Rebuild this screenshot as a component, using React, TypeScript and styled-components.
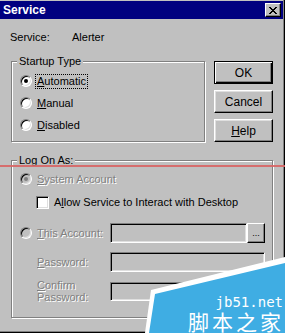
import React from "react";
import styled, { createGlobalStyle } from "styled-components";

const Global = createGlobalStyle`
  html, body { margin: 0; padding: 0; background: #c0c0c0; }
  body { font-family: "Liberation Sans", Arial, sans-serif; font-size: 11px; color: #000; }
`;

const Window = styled.div`
  position: relative;
  width: 285px;
  height: 333px;
  box-sizing: border-box;
  padding-top: 1px;
  background: #c0c0c0;
  overflow: hidden;
  box-shadow: inset -1px -1px 0 #000, inset -2px -2px 0 #808080;
`;

const TitleBar = styled.div`
  height: 18px;
  margin-right: 2px;
  background: #000080;
  display: flex;
  align-items: center;
  justify-content: space-between;
  padding: 0 2px 0 3px;
`;

const TitleText = styled.span`
  color: #fff;
  font-weight: bold;
  font-size: 12px;
`;

const CloseButton = styled.div`
  width: 16px;
  height: 14px;
  box-sizing: border-box;
  background: #c0c0c0;
  border: 1px solid;
  border-color: #fff #000 #000 #fff;
  box-shadow: inset -1px -1px 0 #808080;
  display: flex;
  align-items: center;
  justify-content: center;
`;

const Body = styled.div`
  padding: 0 12px 0 11px;
`;

const InfoRow = styled.div`
  display: flex;
  margin: 12px 0 0 -1px;
  line-height: 13px;
`;

const InfoLabel = styled.span`
  width: 62px;
`;

const TopRow = styled.div`
  display: flex;
  gap: 9px;
  margin-top: 17px;
`;

const GroupBox = styled.div<{ $w: number; $h: number }>`
  position: relative;
  width: ${(p) => p.$w}px;
  height: ${(p) => p.$h}px;
  box-sizing: border-box;
  border: 1px solid #808080;
  box-shadow: inset 1px 1px 0 #fff, 1px 1px 0 #fff;
`;

const Legend = styled.span`
  position: absolute;
  top: -7px;
  left: 5px;
  padding: 0 2px;
  background: #c0c0c0;
  line-height: 13px;
`;

const RadioList = styled.div`
  padding: 8px 0 0 8px;
`;

const OptionRow = styled.div<{ $h?: number; $mt?: number; $indent?: number }>`
  display: flex;
  align-items: center;
  height: ${(p) => p.$h ?? 22}px;
  margin-top: ${(p) => p.$mt ?? 0}px;
  padding-left: ${(p) => p.$indent ?? 0}px;
  gap: 5px;
`;

const Radio = styled.span<{ $checked?: boolean; $disabled?: boolean }>`
  position: relative;
  width: 12px;
  height: 12px;
  flex: none;
  box-sizing: border-box;
  border-radius: 50%;
  border: 1px solid;
  border-color: #808080 #fff #fff #808080;
  background: ${(p) => (p.$disabled ? "#c0c0c0" : "#fff")};
  box-shadow: inset 1px 1px 0 #000, inset -1px -1px 0 #dfdfdf;
  &::after {
    content: "";
    display: ${(p) => (p.$checked ? "block" : "none")};
    position: absolute;
    left: 3px;
    top: 3px;
    width: 4px;
    height: 4px;
    border-radius: 50%;
    background: ${(p) => (p.$disabled ? "#808080" : "#000")};
  }
`;

const Check = styled.span`
  width: 13px;
  height: 13px;
  flex: none;
  box-sizing: border-box;
  border: 1px solid;
  border-color: #808080 #fff #fff #808080;
  background: #fff;
  box-shadow: inset 1px 1px 0 #000, inset -1px -1px 0 #dfdfdf;
`;

const Label = styled.span<{ $disabled?: boolean; $focus?: boolean }>`
  line-height: 13px;
  color: ${(p) => (p.$disabled ? "#808080" : "#000")};
  text-shadow: ${(p) => (p.$disabled ? "1px 1px 0 #fff" : "none")};
  outline: ${(p) => (p.$focus ? "1px dotted #000" : "none")};
  outline-offset: 0px;
  padding: ${(p) => (p.$focus ? "0 1px" : "0")};
  margin-left: ${(p) => (p.$focus ? "-1px" : "0")};
  u { text-decoration-thickness: 1px; text-underline-offset: 1px; }
`;

const TwoLineLabel = styled(Label)`
  line-height: 12px;
`;

const ButtonColumn = styled.div`
  display: flex;
  flex-direction: column;
  gap: 6px;
`;

const Button = styled.div<{ $default?: boolean }>`
  width: 59px;
  height: 23px;
  box-sizing: border-box;
  display: flex;
  align-items: center;
  justify-content: center;
  background: #c0c0c0;
  border: 1px solid;
  border-color: ${(p) => (p.$default ? "#000" : "#fff #000 #000 #fff")};
  box-shadow: ${(p) =>
    p.$default
      ? "inset 1px 1px 0 #fff, inset -1px -1px 0 #000, inset -2px -2px 0 #808080"
      : "inset -1px -1px 0 #808080, inset 1px 1px 0 #dfdfdf"};
  font-size: 12px;
  u { text-decoration-thickness: 1px; text-underline-offset: 1px; }
`;

const LogOnGroup = styled(GroupBox)`
  margin-top: 18px;
`;

const LogOnContent = styled.div`
  padding: 8px 7px 0 8px;
`;

const FieldRow = styled.div<{ $mt: number }>`
  display: flex;
  align-items: center;
  margin-top: ${(p) => p.$mt}px;
`;

const FieldLabelCell = styled.div<{ $indent?: number }>`
  width: 90px;
  flex: none;
  display: flex;
  align-items: center;
  gap: 5px;
  padding-left: ${(p) => p.$indent ?? 0}px;
  box-sizing: border-box;
  line-height: 12px;
`;

const TextBox = styled.div<{ $h?: number }>`
  flex: 1;
  height: ${(p) => p.$h ?? 20}px;
  box-sizing: border-box;
  border: 1px solid;
  border-color: #808080 #fff #fff #808080;
  box-shadow: inset 1px 1px 0 #000, inset -1px -1px 0 #dfdfdf;
  background: #c0c0c0;
`;

const BrowseButton = styled.div`
  width: 18px;
  height: 20px;
  flex: none;
  box-sizing: border-box;
  border: 1px solid;
  border-color: #fff #000 #000 #fff;
  box-shadow: inset -1px -1px 0 #808080;
  display: flex;
  align-items: flex-end;
  justify-content: center;
  padding-bottom: 4px;
  font-size: 9px;
  line-height: 9px;
  color: #000;
`;

const RedLine = styled.div`
  position: absolute;
  left: 0;
  right: 0;
  top: 165px;
  height: 2px;
  background: #d86464;
  opacity: 0.9;
`;

const WatermarkShape = styled.svg`
  position: absolute;
  left: 0;
  top: 0;
`;

const WatermarkText = styled.div`
  position: absolute;
  right: 1px;
  bottom: 1px;
  display: flex;
  flex-direction: column;
  align-items: flex-end;
  gap: 2px;
  color: #fff;
`;

const WmUrl = styled.span`
  font-family: "DejaVu Sans Mono", "Liberation Mono", monospace;
  font-size: 14px;
  line-height: 14px;
  margin-right: 1px;
`;

const WmCn = styled.span`
  font-family: "Noto Sans CJK SC", sans-serif;
  font-size: 21px;
  line-height: 21px;
  letter-spacing: 3px;
`;

export default function App() {
  return (
    <Window>
      <Global />
      <TitleBar>
        <TitleText>Service</TitleText>
        <CloseButton>
          <svg width="8" height="7" viewBox="0 0 8 7" shapeRendering="crispEdges">
            <path d="M0 0h2v1h-2zM6 0h2v1h-2zM1 1h2v1h-2zM5 1h2v1h-2zM2 2h4v1h-4zM3 3h2v1h-2zM2 4h4v1h-4zM1 5h2v1h-2zM5 5h2v1h-2zM0 6h2v1h-2zM6 6h2v1h-2z" fill="#000" />
          </svg>
        </CloseButton>
      </TitleBar>
      <Body>
        <InfoRow>
          <InfoLabel>Service:</InfoLabel>
          <span>Alerter</span>
        </InfoRow>
        <TopRow>
          <GroupBox $w={194} $h={81}>
            <Legend>Startup Type</Legend>
            <RadioList>
              <OptionRow>
                <Radio $checked />
                <Label $focus><u>A</u>utomatic</Label>
              </OptionRow>
              <OptionRow>
                <Radio />
                <Label><u>M</u>anual</Label>
              </OptionRow>
              <OptionRow>
                <Radio />
                <Label><u>D</u>isabled</Label>
              </OptionRow>
            </RadioList>
          </GroupBox>
          <ButtonColumn>
            <Button $default>OK</Button>
            <Button>Cancel</Button>
            <Button><u>H</u>elp</Button>
          </ButtonColumn>
        </TopRow>
        <LogOnGroup $w={262} $h={158}>
          <Legend>Log On As:</Legend>
          <LogOnContent>
            <OptionRow $h={20}>
              <Radio $checked $disabled />
              <Label $disabled><u>S</u>ystem Account</Label>
            </OptionRow>
            <OptionRow $h={20} $mt={3} $indent={16}>
              <Check />
              <Label>A<u>l</u>low Service to Interact with Desktop</Label>
            </OptionRow>
            <FieldRow $mt={11}>
              <FieldLabelCell>
                <Radio $disabled />
                <Label $disabled><u>T</u>his Account:</Label>
              </FieldLabelCell>
              <TextBox />
              <BrowseButton>...</BrowseButton>
            </FieldRow>
            <FieldRow $mt={9}>
              <FieldLabelCell $indent={17}>
                <Label $disabled><u>P</u>assword:</Label>
              </FieldLabelCell>
              <TextBox />
            </FieldRow>
            <FieldRow $mt={7}>
              <FieldLabelCell $indent={17}>
                <TwoLineLabel $disabled>
                  <u>C</u>onfirm
                  <br />
                  Password:
                </TwoLineLabel>
              </FieldLabelCell>
              <TextBox $h={19} />
            </FieldRow>
          </LogOnContent>
        </LogOnGroup>
      </Body>
      <RedLine />
      <WatermarkShape width="285" height="333" viewBox="0 0 285 333">
        <polygon points="145,333 151,290 285,257 285,333" fill="#fff" />
        <polygon points="149,333 155,294 285,263 285,333" fill="#3fade3" />
      </WatermarkShape>
      <WatermarkText>
        <WmUrl>jb51.net</WmUrl>
        <WmCn>脚本之家</WmCn>
      </WatermarkText>
    </Window>
  );
}
